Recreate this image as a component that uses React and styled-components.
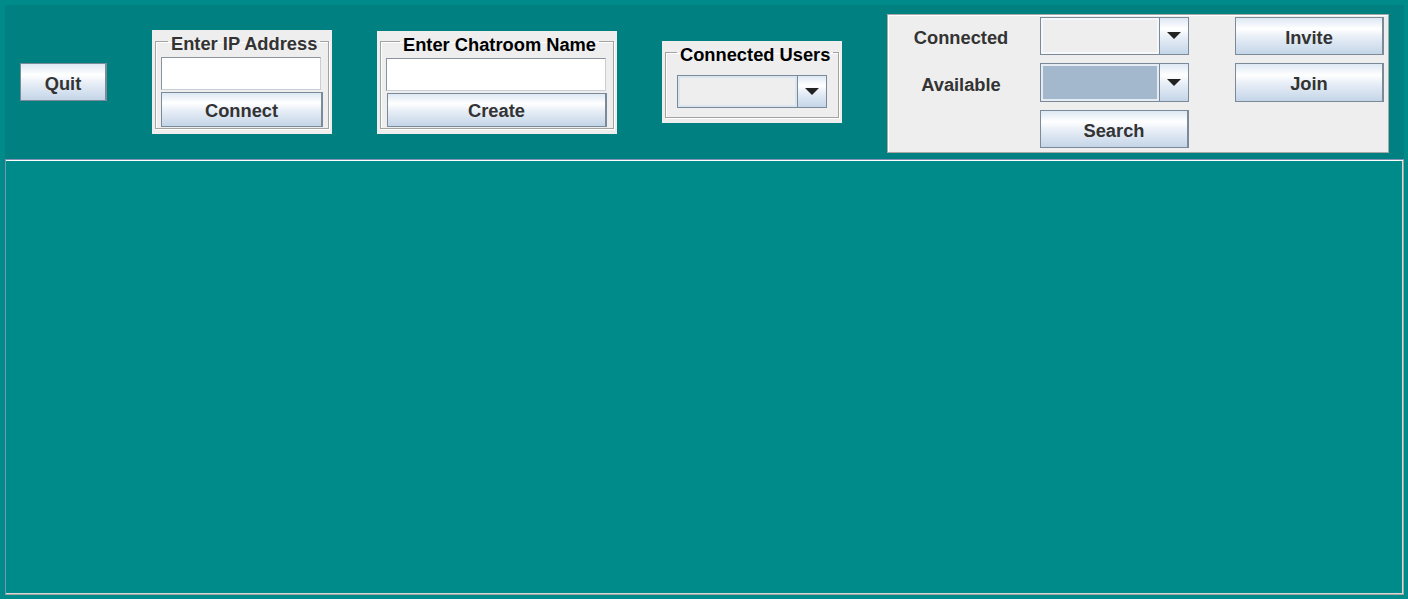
import React from "react";
import styled, { createGlobalStyle } from "styled-components";

const Global = createGlobalStyle`
  body {
    margin: 0;
    background: #008b8b;
    font-family: "Liberation Sans", Arial, sans-serif;
  }
`;

const Frame = styled.div`
  padding: 5px 4px 5px 5px;
  display: flex;
  flex-direction: column;
`;

const TopBar = styled.div`
  height: 154px;
  background: #008080;
  display: flex;
  align-items: center;
  gap: 45px;
  padding-left: 15px;
`;

const ChatArea = styled.div`
  height: 436px;
  box-sizing: border-box;
  border: 1px solid #a4a4a4;
  border-top-color: #8390b5;
  border-left-color: #8390b5;
  box-shadow: inset 0 1px 0 #ffffff, inset -1px -1px 0 #d8d8d8;
  background: #008b8b;
`;

const Button = styled.button`
  width: ${(p) => p.$w || "100%"};
  height: ${(p) => p.$h || 38}px;
  box-sizing: border-box;
  margin: 0;
  padding: 3px 0 0;
  border: 1px solid #7a8a99;
  border-right-width: 2px;
  background: linear-gradient(180deg, #dde8f3 0%, #ffffff 30%, #e6edf6 55%, #c4d5e8 100%);
  font-family: inherit;
  font-weight: bold;
  font-size: 18.3px;
  color: #333333;
`;

const Panel = styled.div`
  width: ${(p) => p.$w}px;
  box-sizing: border-box;
  background: #eeeeee;
  padding: 0 3px 5px;
`;

const Group = styled.fieldset`
  margin: 0;
  padding: ${(p) => p.$pad};
  border: 1px solid #a3a3a3;
  box-shadow: inset 1px 1px 0 #ffffff, 1px 1px 0 #ffffff;
  display: flex;
  flex-direction: column;
  gap: 2px;
`;

const Title = styled.legend`
  padding: 5px 3px 0;
  margin-left: ${(p) => p.$ml}px;
  line-height: 17px;
  font-size: 18.3px;
  font-weight: bold;
  white-space: nowrap;
  color: ${(p) => p.$color || "#000"};
`;

const Field = styled.input`
  width: ${(p) => p.$w}px;
  height: 33px;
  box-sizing: border-box;
  margin: 0;
  border: 1px solid #8a949e;
  border-right-color: #c8ced6;
  border-bottom-color: #c8ced6;
  background: #ffffff;
  outline: none;
`;

const ComboBox = styled.div`
  width: ${(p) => p.$w || "100%"};
  height: ${(p) => p.$h}px;
  box-sizing: border-box;
  display: flex;
  border: 1px solid #7a8a99;
`;

const ComboValue = styled.div`
  flex: 1;
  background: ${(p) => p.$bg || "#eeeeee"};
  box-shadow: inset 0 0 0 2px ${(p) => p.$edge || "#f6f8fb"};
`;

const ComboArrow = styled.div`
  width: 28px;
  border-left: 1px solid #7a8a99;
  background: linear-gradient(180deg, #dde8f3 0%, #ffffff 30%, #e6edf6 55%, #c4d5e8 100%);
  display: flex;
  align-items: center;
  justify-content: center;
`;

const Search = styled.div`
  width: 502px;
  box-sizing: border-box;
  align-self: flex-start;
  margin-top: 9px;
  background: #eeeeee;
  border: 1px solid #a8a8a8;
  box-shadow: inset 1px 1px 0 #ffffff;
  padding: 2px 4px 4px 0;
  display: grid;
  grid-template-columns: 152px 149px 46px 149px;
  grid-template-rows: 38px 39px 38px;
  row-gap: 8px;
  align-items: center;
`;

const Label = styled.div`
  grid-column: 1;
  grid-row: ${(p) => p.$row};
  padding: 4px 6px 0 0;
  text-align: center;
  font-size: 18.3px;
  font-weight: bold;
  color: #333333;
`;

const Cell = styled.div`
  grid-column: ${(p) => p.$col};
  grid-row: ${(p) => p.$row};
  height: 100%;
  display: flex;
`;

function Combo({ w, h, bg, edge }) {
  return (
    <ComboBox $w={w} $h={h}>
      <ComboValue $bg={bg} $edge={edge} />
      <ComboArrow>
        <svg width="14" height="8" viewBox="0 0 14 8">
          <polygon points="0,0 14,0 7,7" fill="#222" />
        </svg>
      </ComboArrow>
    </ComboBox>
  );
}

export default function App() {
  return (
    <>
      <Global />
      <Frame>
        <TopBar>
          <Button $w="87px">Quit</Button>

          <Panel $w={180}>
            <Group $pad="5px 5px 1px">
              <Title $ml={7} $color="#333333">Enter IP Address</Title>
              <Field $w={160} />
              <Button $h={35}>Connect</Button>
            </Group>
          </Panel>

          <Panel $w={240}>
            <Group $pad="5px 5px 1px">
              <Title $ml={14}>Enter Chatroom Name</Title>
              <Field $w={220} />
              <Button $h={34} $w="220px" style={{ marginLeft: 1 }}>Create</Button>
            </Group>
          </Panel>

          <Panel $w={180}>
            <Group $pad="12px 4px 9px 11px">
              <Title $ml={0}>Connected Users</Title>
              <Combo w="150px" h={33} edge="#dbe5ef" />
            </Group>
          </Panel>

          <Search>
            <Label $row={1}>Connected</Label>
            <Cell $col={2} $row={1}>
              <Combo h={38} />
            </Cell>
            <Cell $col={4} $row={1}>
              <Button>Invite</Button>
            </Cell>
            <Label $row={2}>Available</Label>
            <Cell $col={2} $row={2}>
              <Combo h={39} bg="#a3b8cc" edge="#e6ecf3" />
            </Cell>
            <Cell $col={4} $row={2}>
              <Button $h={39}>Join</Button>
            </Cell>
            <Cell $col={2} $row={3}>
              <Button>Search</Button>
            </Cell>
          </Search>
        </TopBar>
        <ChatArea />
      </Frame>
    </>
  );
}
